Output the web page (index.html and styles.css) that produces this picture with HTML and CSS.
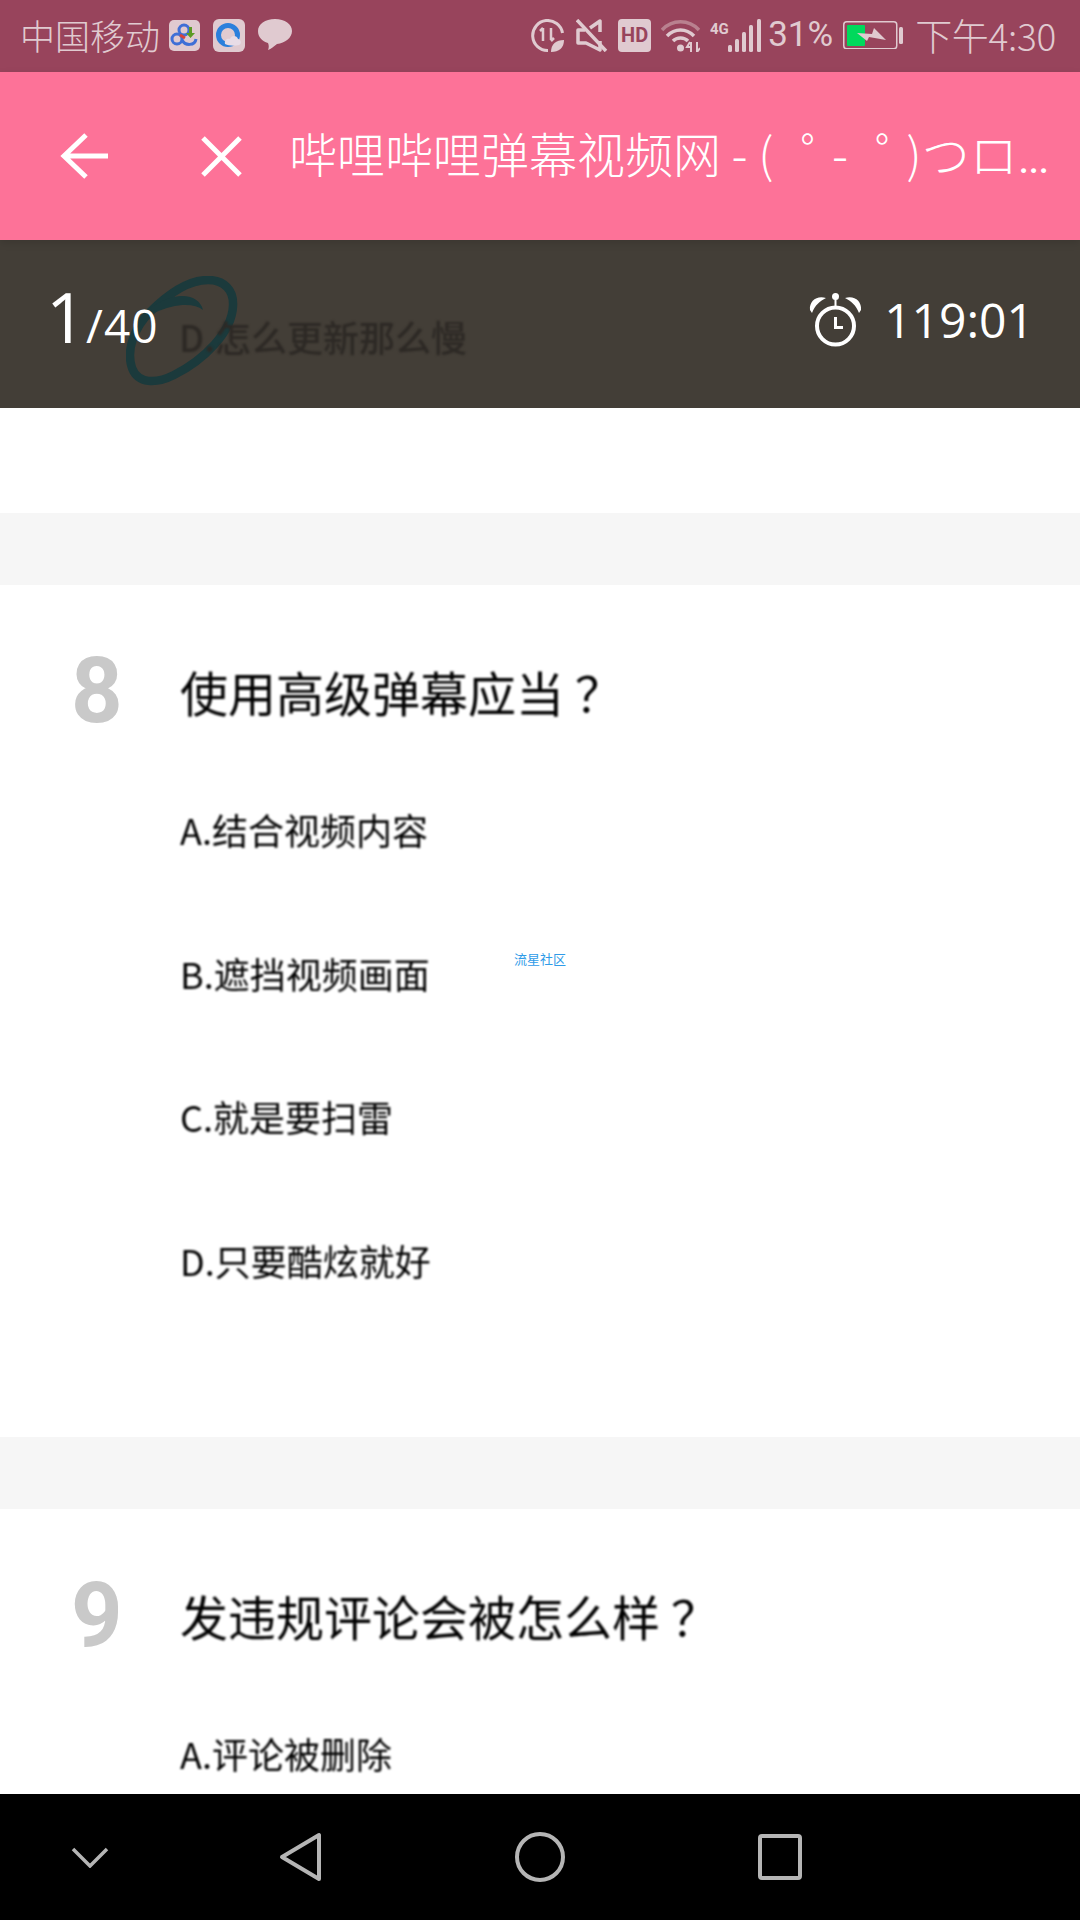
FILE: index.html
```html
<!DOCTYPE html>
<html lang="zh-CN">
<head>
<meta charset="utf-8">
<title>哔哩哔哩弹幕视频网</title>
<link rel="stylesheet" href="styles.css">
</head>
<body>
<div class="page">
  <header class="status">
    <div class="status-left">
      <span class="carrier">中国移动</span>
      <svg class="ic-tile" viewBox="0 0 31 31"><rect width="31" height="31" rx="5" fill="#e0cad0"/><g fill="none" stroke="#3f6fd6" stroke-width="3"><circle cx="15" cy="10" r="5"/><circle cx="8" cy="19" r="5"/><path d="M13 20c3 6 13 6 14-1"/></g><path d="M11 15l5 3" stroke="#d8433a" stroke-width="3"/><path d="M23 7v6h3l-4.500 5-4.500-5h3V7z" fill="#5c9a25"/></svg>
      <svg class="ic-tile2" viewBox="0 0 32 33"><rect width="32" height="33" rx="6" fill="#e0cad0"/><circle cx="15" cy="16" r="9.500" fill="none" stroke="#2b7fdc" stroke-width="5"/><path d="M12 25c-1-5 3-6 5-5 1-4 7-4 8 0 3 0 4 5 1 6-4 1-10 1-14-1z" fill="#e8dce6"/></svg>
      <svg class="ic-bubble" viewBox="0 0 34 32"><path d="M17 0c10 0 17 5 17 12 0 7-7 12-15 13-3 2-6 5-9 6 1-2 1-5 0-7C4 22 0 18 0 12 0 5 7 0 17 0z" fill="#e0cad0"/></svg>
    </div>
    <div class="status-right">
      <svg class="ic-data" viewBox="0 0 35 33"><path d="M17 31.500A15 15 0 1 1 31.500 14" fill="none" stroke="#e0cad0" stroke-width="3"/><path d="M12 9v13M12 9l-3 3M20 9v12m0 1l3-3" fill="none" stroke="#e0cad0" stroke-width="2.500"/><path d="M20 33c0-8 5-12 13-12 0 8-5 12-13 12z" fill="#e0cad0"/></svg>
      <svg class="ic-mute" viewBox="0 0 32 33"><path d="M9 11H2v13h8l14 7V22M14 9l10-7v11" fill="none" stroke="#e0cad0" stroke-width="3.500" stroke-linejoin="round"/><path d="M1 1l29 31" stroke="#e0cad0" stroke-width="3.500"/></svg>
      <span class="hd">HD</span>
      <svg class="ic-wifi" viewBox="0 0 39 34"><path d="M1 12c10-11 27-11 37 0" fill="none" stroke="#b9818f" stroke-width="3.500"/><path d="M6 18c8-8 19-8 27 0M12 23c4-4 11-4 15 0" fill="none" stroke="#e0cad0" stroke-width="3.500"/><circle cx="19.500" cy="30" r="3.500" fill="#e0cad0"/><path d="M30 24v10M29 24l-3 5h4M36 24v10l3-4" fill="none" stroke="#e0cad0" stroke-width="2"/></svg>
      <svg class="ic-signal" viewBox="0 0 52 33"><text class="ic-4g" x="0" y="15">4G</text><g fill="#e0cad0"><rect x="18" y="26" width="4" height="7" rx="1.500"/><rect x="25" y="20" width="4" height="13" rx="1.500"/><rect x="32" y="13" width="4" height="20" rx="1.500"/><rect x="39" y="6" width="4" height="27" rx="1.500"/><rect x="47" y="0" width="4" height="33" rx="1.500"/></g></svg>
      <span class="pct">31%</span>
      <svg class="ic-batt" viewBox="0 0 60 28"><rect x="0.750" y="0.750" width="53" height="27" rx="3" fill="none" stroke="#e0cad0" stroke-width="1.500"/><rect x="4" y="4" width="18" height="21" rx="1" fill="#00d95c"/><path d="M14 12l15 1 2-6 12 12-17-3-2 4z" fill="#e0cad0"/><rect x="56" y="6" width="4" height="17" rx="1.500" fill="#e0cad0"/></svg>
      <span class="clock">下午4:30</span>
    </div>
  </header>

  <nav class="appbar">
    <svg class="ic-back" viewBox="0 0 48 46"><path d="M26 2L4 23l22 21M4 23h44" fill="none" stroke="#fff" stroke-width="5"/></svg>
    <svg class="ic-close" viewBox="0 0 41 41"><path d="M2 2l37 37M39 2L2 39" fill="none" stroke="#fff" stroke-width="5"/></svg>
    <div class="title">哔哩哔哩弹幕视频网 - ( <span class="kana">゜</span>- <span class="kana">゜</span>)つロ<span class="dots">...</span></div>
  </nav>

  <section class="scorebar">
    <div class="ghost">
      <svg class="ghost-ring" viewBox="0 0 112 111"><path d="M107 30C106 56 78 84 48 99 30 108 12 108 6 92 0 74 8 52 24 36 42 18 62 4 82 4 98 4 108 14 107 30z" fill="none" stroke="#1b3a3c" stroke-width="8.500"/><path d="M24 32C34 25 46 20 56 20 68 20 75 26 77 34 68 27 50 27 28 37z" fill="#1b3a3c"/></svg>
      <span class="ghost-text">D.怎么更新那么慢</span>
    </div>
    <div class="progress"><span class="progress-now">1</span><span class="progress-all">/40</span></div>
    <div class="timer">
      <svg class="ic-alarm" viewBox="0 0 53 54"><g fill="#fff"><path d="M1 17C0 8 8 2 17 5 11 8 6 12 3 20z"/><path d="M52 17c1-9-7-15-16-12 6 3 11 7 14 15z"/><circle cx="26.500" cy="3.500" r="3.500"/><rect x="25.500" y="5" width="2" height="9"/><rect x="25" y="24" width="3" height="12"/><rect x="25" y="33" width="9" height="3"/></g><circle cx="26.500" cy="33" r="18.500" fill="none" stroke="#fff" stroke-width="4"/></svg>
      <span>119:01</span>
    </div>
  </section>

  <main class="content">
    <div class="card-end"></div>
    <div class="gap"></div>
    <article class="card">
      <div class="num">8</div>
      <div class="body">
        <div class="question">使用高级弹幕应当<span class="qm">？</span></div>
        <div class="options">
          <div class="option">A.结合视频内容</div>
          <div class="option">B.遮挡视频画面</div>
          <div class="option">C.就是要扫雷</div>
          <div class="option">D.只要酷炫就好</div>
        </div>
      </div>
      <span class="watermark">流星社区</span>
    </article>
    <div class="gap"></div>
    <article class="card">
      <div class="num">9</div>
      <div class="body">
        <div class="question">发违规评论会被怎么样<span class="qm">？</span></div>
        <div class="options">
          <div class="option">A.评论被删除</div>
        </div>
      </div>
    </article>
  </main>

  <footer class="navbar">
    <div class="nav-first"><svg class="ic-chev" viewBox="0 0 38 21"><path d="M2 2l17 17L36 2" fill="none" stroke="#b5b5b5" stroke-width="3.500"/></svg></div>
    <div class="nav-item"><svg class="ic-tri" viewBox="0 0 43 50"><path d="M40 3v44L3 25z" fill="none" stroke="#b5b5b5" stroke-width="4" stroke-linejoin="round"/></svg></div>
    <div class="nav-item"><svg class="ic-circ" viewBox="0 0 50 50"><circle cx="25" cy="25" r="23" fill="none" stroke="#b5b5b5" stroke-width="4"/></svg></div>
    <div class="nav-item"><svg class="ic-sq" viewBox="0 0 44 46"><rect x="2" y="2" width="40" height="42" rx="2" fill="none" stroke="#b5b5b5" stroke-width="4"/></svg></div>
  </footer>
</div>
</body>
</html>
```

FILE: styles.css
```css
* { box-sizing: border-box; }
html, body { margin: 0; padding: 0; background: #fff; }
svg { display: block; flex: none; }

.page {
  width: 1080px;
  height: 1920px;
  display: flex;
  flex-direction: column;
  overflow: hidden;
  font-family: "Noto Sans CJK SC", "Noto Sans", sans-serif;
}

/* status bar */
.status {
  height: 72px;
  flex: none;
  background: #98445c;
  color: #e0cad0;
  display: flex;
  align-items: center;
  justify-content: space-between;
  padding: 0 24px 2px 20px;
}
.status-left, .status-right { display: flex; align-items: center; }
.carrier { font-size: 35px; line-height: 70px; font-weight: 300; width: 149px; white-space: nowrap; }
.ic-tile { width: 31px; height: 31px; margin-right: 13px; }
.ic-tile2 { width: 32px; height: 33px; margin-right: 13px; }
.ic-bubble { width: 34px; height: 32px; }
.status-right { gap: 10px; }
.ic-data { width: 35px; height: 33px; }
.ic-mute { width: 32px; height: 33px; }
.hd {
  width: 33px;
  height: 33px;
  border-radius: 4px;
  background: #e0cad0;
  color: #98445c;
  font: 700 20px/33px "Roboto", sans-serif;
  text-align: center;
}
.ic-wifi { width: 39px; height: 34px; }
.ic-signal { width: 52px; height: 33px; }
.ic-4g { font: 700 15px "Roboto", sans-serif; fill: #e0cad0; }
.pct { font: 400 35px/70px "Roboto", sans-serif; margin-left: -4px; }
.ic-batt { width: 60px; height: 28px; }
.clock { font: 300 37px/70px "Noto Sans CJK SC", sans-serif; margin-left: 2px; white-space: nowrap; letter-spacing: -.3px; }

/* app bar */
.appbar {
  height: 168px;
  flex: none;
  background: #fd7298;
  color: #fff;
  display: flex;
  align-items: center;
  padding-left: 60px;
  position: relative;
  z-index: 2;
  box-shadow: 0 3px 8px rgba(0, 0, 0, .12);
}
.ic-back { width: 48px; height: 46px; }
.ic-close { width: 41px; height: 41px; margin-left: 93px; }
.title {
  margin-left: 47px;
  font-size: 48px;
  font-weight: 300;
  line-height: 60px;
  white-space: nowrap;
}
.kana { padding-left: 17px; letter-spacing: -17px; }
.dots { font: 500 36px/60px "Roboto", sans-serif; margin-left: 1px; }

/* dark score bar */
.scorebar {
  height: 168px;
  flex: none;
  background: #433e37;
  color: #fff;
  display: flex;
  align-items: center;
  justify-content: space-between;
  padding: 0 46px 8px 46px;
  position: relative;
  font-family: "Open Sans", sans-serif;
}
.ghost { position: absolute; left: 126px; top: 36px; }
.ghost-ring { width: 112px; height: 111px; }
.ghost-text {
  position: absolute;
  left: 53px;
  top: 37px;
  font: 500 36px/46px "Noto Sans CJK SC", sans-serif;
  color: #2d2925;
  white-space: nowrap;
  filter: blur(1px);
}
.progress { position: relative; display: flex; align-items: baseline; }
.progress-now { font-size: 70px; line-height: 96px; }
.progress-all { font-size: 46px; line-height: 96px; letter-spacing: 1px; }
.timer { position: relative; display: flex; align-items: center; gap: 22px; font-size: 48px; line-height: 64px; }
.ic-alarm { width: 53px; height: 54px; }

/* list */
.content { flex: 1; min-height: 0; overflow: hidden; }
.card-end { height: 105px; background: #fff; }
.gap { height: 72px; background: #f6f6f6; }
.card {
  display: flex;
  position: relative;
  background: #fff;
  padding: 76px 0 147px 0;
}
.num {
  width: 180px;
  flex: none;
  padding-left: 71px;
  padding-top: 1px;
  font: 700 90px/60px "Roboto", sans-serif;
  color: #c9c9c9;
}
.body { flex: 1; filter: blur(.9px); color: #000; font-weight: 400; }
.question { font-size: 48px; line-height: 60px; margin-bottom: 78px; }
.qm { padding-left: 11px; }
.options { display: flex; flex-direction: column; gap: 83.5px; }
.option { font-size: 36px; line-height: 60px; }
.watermark {
  position: absolute;
  left: 514px;
  top: 366px;
  font-size: 13px;
  line-height: 16px;
  color: #2f9be8;
}

/* system nav */
.navbar {
  height: 126px;
  flex: none;
  background: #000;
  display: flex;
  align-items: center;
}
.nav-first { width: 180px; display: flex; justify-content: center; }
.nav-item { width: 240px; display: flex; justify-content: center; }
.ic-chev { width: 38px; height: 21px; }
.ic-tri { width: 43px; height: 50px; }
.ic-circ { width: 50px; height: 50px; }
.ic-sq { width: 44px; height: 46px; }
```
